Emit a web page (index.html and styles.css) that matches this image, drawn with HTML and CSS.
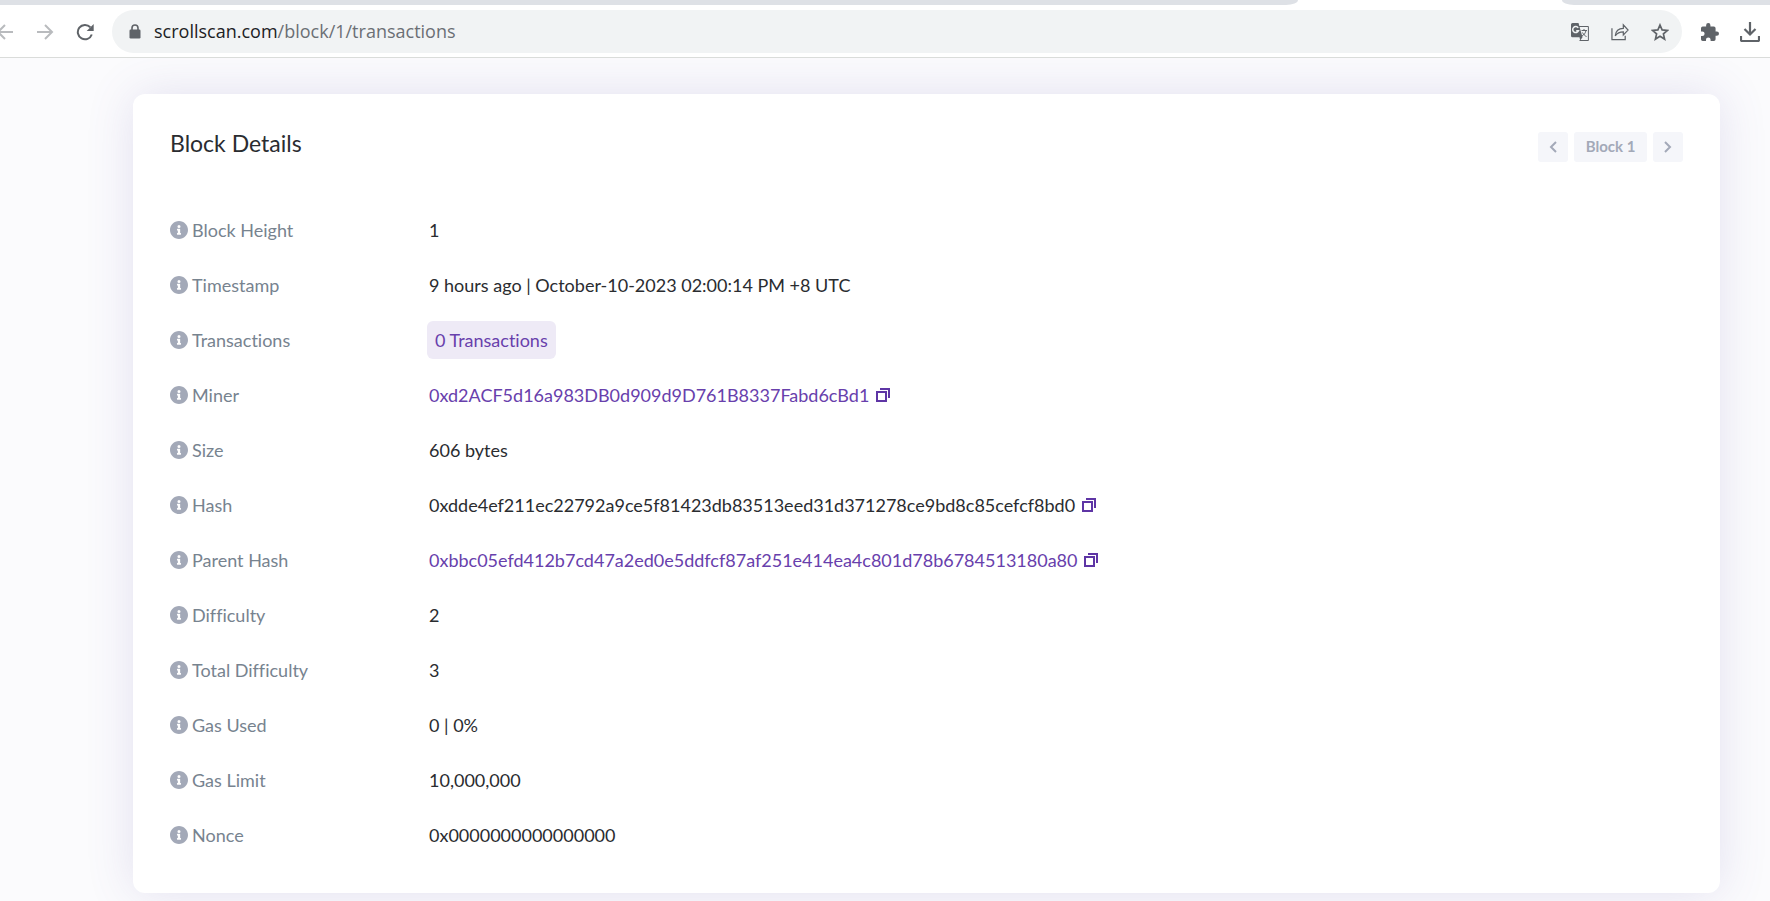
FILE: index.html
```html
<!DOCTYPE html>
<html lang="en">
<head>
<meta charset="utf-8">
<meta name="viewport" content="width=device-width, initial-scale=1">
<title>Block Details</title>
<link rel="stylesheet" href="styles.css">
</head>
<body>
<svg class="sprite" aria-hidden="true">
  <symbol id="info" viewBox="8 8 496 496"><path d="M256 8C119 8 8 119 8 256s111 248 248 248 248-111 248-248S393 8 256 8zm0 110a42 42 0 1 1 0 84 42 42 0 0 1 0-84zm56 254a12 12 0 0 1-12 12h-88a12 12 0 0 1-12-12v-24a12 12 0 0 1 12-12h12v-64h-12a12 12 0 0 1-12-12v-24a12 12 0 0 1 12-12h64a12 12 0 0 1 12 12v100h12a12 12 0 0 1 12 12z"/></symbol>
  <symbol id="copy" viewBox="0 0 14 14"><path d="M1 4h9v9H1zM4 1h9v9" fill="none" stroke="currentColor" stroke-width="2"/></symbol>
</svg>
<header class="browser">
  <div class="tabs"><span class="tab-left"></span><span class="tab-right"></span></div>
  <div class="toolbar">
    <nav class="nav" aria-label="History">
      <button class="tool faded" aria-label="Back"><svg viewBox="0 0 18 18"><path d="M17 9H2M9 2L2 9l7 7" fill="none" stroke="currentColor" stroke-width="2"/></svg></button>
      <button class="tool faded" aria-label="Forward"><svg viewBox="0 0 18 18"><path d="M1 9h15M9 2l7 7-7 7" fill="none" stroke="currentColor" stroke-width="2"/></svg></button>
      <button class="tool" aria-label="Reload"><svg viewBox="0 0 18 18"><path d="M15.8 11.5A7.2 7.2 0 1 1 14.3 4.2" fill="none" stroke="currentColor" stroke-width="2"/><path d="M17.7 1v7h-7z"/></svg></button>
    </nav>
    <div class="address">
      <svg class="lock" viewBox="0 0 12 15"><path d="M3 6V4a3 3 0 0 1 6 0v2" fill="none" stroke="currentColor" stroke-width="1.6"/><rect x="0.5" y="5.5" width="11" height="9" rx="1.2"/></svg>
      <div class="url" role="textbox" aria-label="Address" contenteditable="true" spellcheck="false">scrollscan.com<span class="path">/block/1/transactions</span></div>
      <div class="actions">
        <button class="tool" aria-label="Translate"><svg viewBox="0 0 18 18"><path d="M8 3.5h9.4v14H8.5" fill="none" stroke="currentColor"/><path d="M1.500 0h6l4 14.200H1.500A1.500 1.500 0 0 1 0 12.700V1.500A1.500 1.500 0 0 1 1.500 0zM8.500 14.200h3L9.200 17.500z"/><path d="M7.200 4.900A3 3 0 1 0 7.500 7.700H5.200" fill="none" stroke="#f1f3f4" stroke-width="1.500"/><path d="M10.500 7.500h5.500M13 6v1.500M15 7.500c-.5 2.500-2 4.500-4 5.500M11.500 9.500c1 2 2.500 3.500 4 4" fill="none" stroke="currentColor"/></svg></button>
        <button class="tool" aria-label="Share"><svg viewBox="0 0 19 18"><path d="M1 5v12h14v-4M4.500 13C5 8 8 5.200 13 5.200V1.500l5 5.500-5 5.200V8.800C9 8.800 6.500 10 4.500 13z" fill="none" stroke="currentColor" stroke-width="1.300"/></svg></button>
        <button class="tool" aria-label="Bookmark"><svg viewBox="0 0 18 18"><path d="M9 2l2.100 4.900 5.300.5-4 3.500 1.200 5.200L9 13.300l-4.600 2.800 1.200-5.200-4-3.500 5.300-.5z" fill="none" stroke="currentColor" stroke-width="1.700"/></svg></button>
      </div>
    </div>
    <button class="tool" aria-label="Extensions"><svg viewBox="2 1 21 21"><path d="M20.500 11H19V7a2 2 0 0 0-2-2h-4V3.500a2.500 2.500 0 0 0-5 0V5H4a2 2 0 0 0-2 2v3.800h1.500a2.700 2.700 0 0 1 0 5.400H2V20a2 2 0 0 0 2 2h3.800v-1.500a2.700 2.700 0 0 1 5.400 0V22H17a2 2 0 0 0 2-2v-4h1.500a2.500 2.500 0 0 0 0-5z"/></svg></button>
    <button class="tool large" aria-label="Downloads"><svg viewBox="0 0 20 20"><path d="M10 0v12M4.500 7L10 12.500 15.500 7M1 14v4a1 1 0 0 0 1 1h16a1 1 0 0 0 1-1v-4" fill="none" stroke="currentColor" stroke-width="2.200"/></svg></button>
  </div>
</header>
<main class="page">
  <section class="card">
    <div class="card-head">
      <h1>Block Details</h1>
      <nav class="pager" aria-label="Blocks">
        <button class="page-btn" aria-label="Previous block"><svg viewBox="0 0 8 12"><path d="M7 1L2 6l5 5" fill="none" stroke="currentColor" stroke-width="2"/></svg></button>
        <button class="page-btn current">Block 1</button>
        <button class="page-btn" aria-label="Next block"><svg viewBox="0 0 8 12"><path d="M1 1l5 5-5 5" fill="none" stroke="currentColor" stroke-width="2"/></svg></button>
      </nav>
    </div>
    <dl class="details">
      <div class="row"><dt><svg class="info"><use href="#info"/></svg>Block Height</dt><dd>1</dd></div>
      <div class="row"><dt><svg class="info"><use href="#info"/></svg>Timestamp</dt><dd>9 hours ago | October-10-2023 02:00:14 PM +8 UTC</dd></div>
      <div class="row"><dt><svg class="info"><use href="#info"/></svg>Transactions</dt><dd><a class="chip" href="#transactions">0 Transactions</a></dd></div>
      <div class="row"><dt><svg class="info"><use href="#info"/></svg>Miner</dt><dd><a href="#miner">0xd2ACF5d16a983DB0d909d9D761B8337Fabd6cBd1</a><button class="copy" aria-label="Copy miner"><svg><use href="#copy"/></svg></button></dd></div>
      <div class="row"><dt><svg class="info"><use href="#info"/></svg>Size</dt><dd>606 bytes</dd></div>
      <div class="row"><dt><svg class="info"><use href="#info"/></svg>Hash</dt><dd>0xdde4ef211ec22792a9ce5f81423db83513eed31d371278ce9bd8c85cefcf8bd0<button class="copy" aria-label="Copy hash"><svg><use href="#copy"/></svg></button></dd></div>
      <div class="row"><dt><svg class="info"><use href="#info"/></svg>Parent Hash</dt><dd><a href="#parent">0xbbc05efd412b7cd47a2ed0e5ddfcf87af251e414ea4c801d78b6784513180a80</a><button class="copy" aria-label="Copy parent hash"><svg><use href="#copy"/></svg></button></dd></div>
      <div class="row"><dt><svg class="info"><use href="#info"/></svg>Difficulty</dt><dd>2</dd></div>
      <div class="row"><dt><svg class="info"><use href="#info"/></svg>Total Difficulty</dt><dd>3</dd></div>
      <div class="row"><dt><svg class="info"><use href="#info"/></svg>Gas Used</dt><dd>0 | 0%</dd></div>
      <div class="row"><dt><svg class="info"><use href="#info"/></svg>Gas Limit</dt><dd>10,000,000</dd></div>
      <div class="row"><dt><svg class="info"><use href="#info"/></svg>Nonce</dt><dd>0x0000000000000000</dd></div>
    </dl>
  </section>
</main>
</body>
</html>
```
FILE: styles.css
```css
* { box-sizing: border-box; }
body {
  margin: 0;
  background: #fbfbfd;
  color: #2a2c30;
  font-family: Lato, sans-serif;
  font-size: 18px;
  font-variant-ligatures: none;
  line-height: 28px;
}
button {
  padding: 0;
  border: 0;
  background: none;
  color: inherit;
  font: inherit;
  cursor: pointer;
}
svg { display: block; fill: currentColor; }
.sprite { display: none; }

.browser {
  position: relative;
  background: #fff;
  border-bottom: 1px solid #dadcda;
}
.tabs { display: flex; justify-content: space-between; height: 5px; }
.tab-left, .tab-right { background: #dee1e6; }
.tab-left { flex: 0 0 1298px; border-bottom-right-radius: 12px 5px; }
.tab-right { flex: 0 0 208px; border-bottom-left-radius: 12px 5px; }
.toolbar {
  display: flex;
  align-items: center;
  padding: 5px 10px 4px 0;
  color: #5f6368;
}
.nav { display: flex; gap: 22px; margin: 0 18px 0 -4px; }
.tool svg { width: 18px; height: 18px; }
.tool.large svg { width: 20px; height: 20px; }
.faded { color: #b9bbbe; }
.address {
  flex: 1;
  display: flex;
  align-items: center;
  height: 43px;
  margin-right: 19px;
  padding: 0 13px 0 17px;
  border-radius: 22px;
  background: #f1f3f4;
}
.lock { width: 12px; height: 15px; }
.url {
  flex: 1;
  margin-left: 13px;
  padding-bottom: 2px;
  color: #202124;
  font-family: "Open Sans", sans-serif;
  font-size: 18px;
  outline: 0;
  white-space: nowrap;
}
.path { color: #6b6f74; }
.actions { display: flex; gap: 22px; }
.large { margin-left: 21px; }

.page { padding: 36px 50px 8px 133px; }
.card {
  padding: 35px 37px 31px;
  border-radius: 12px;
  background: #fff;
  box-shadow: 0 0 48px rgba(100, 90, 170, 0.16);
}
.card-head { display: flex; justify-content: space-between; align-items: flex-start; }
h1 { margin: 0; font-size: 23px; font-weight: 400; line-height: 28px; }
.pager { display: flex; gap: 6px; padding-top: 3px; }
.page-btn {
  display: grid;
  place-items: center;
  width: 30px;
  height: 30px;
  border-radius: 3px;
  background: #f5f6fa;
  color: #a3a9b8;
}
.page-btn svg { width: 8px; height: 12px; }
.current { width: 73px; padding-bottom: 2px; font-size: 15px; font-weight: 700; line-height: 24px; }

.details { margin: 40px 0 0; }
.row { display: flex; align-items: center; height: 55px; }
dt { display: flex; align-items: center; gap: 4px; flex: 0 0 259px; color: #77838f; }
dd { display: flex; align-items: center; margin: 0; }
.info { width: 18px; height: 18px; color: #a3a9b8; }
a { color: #6840ac; text-decoration: none; }
.chip { margin-left: -2px; padding: 5px 8px; border-radius: 6px; background: #eeeaf6; }
.copy { margin-left: 7px; color: #5e35a5; }
.copy svg { width: 14px; height: 14px; }
```
